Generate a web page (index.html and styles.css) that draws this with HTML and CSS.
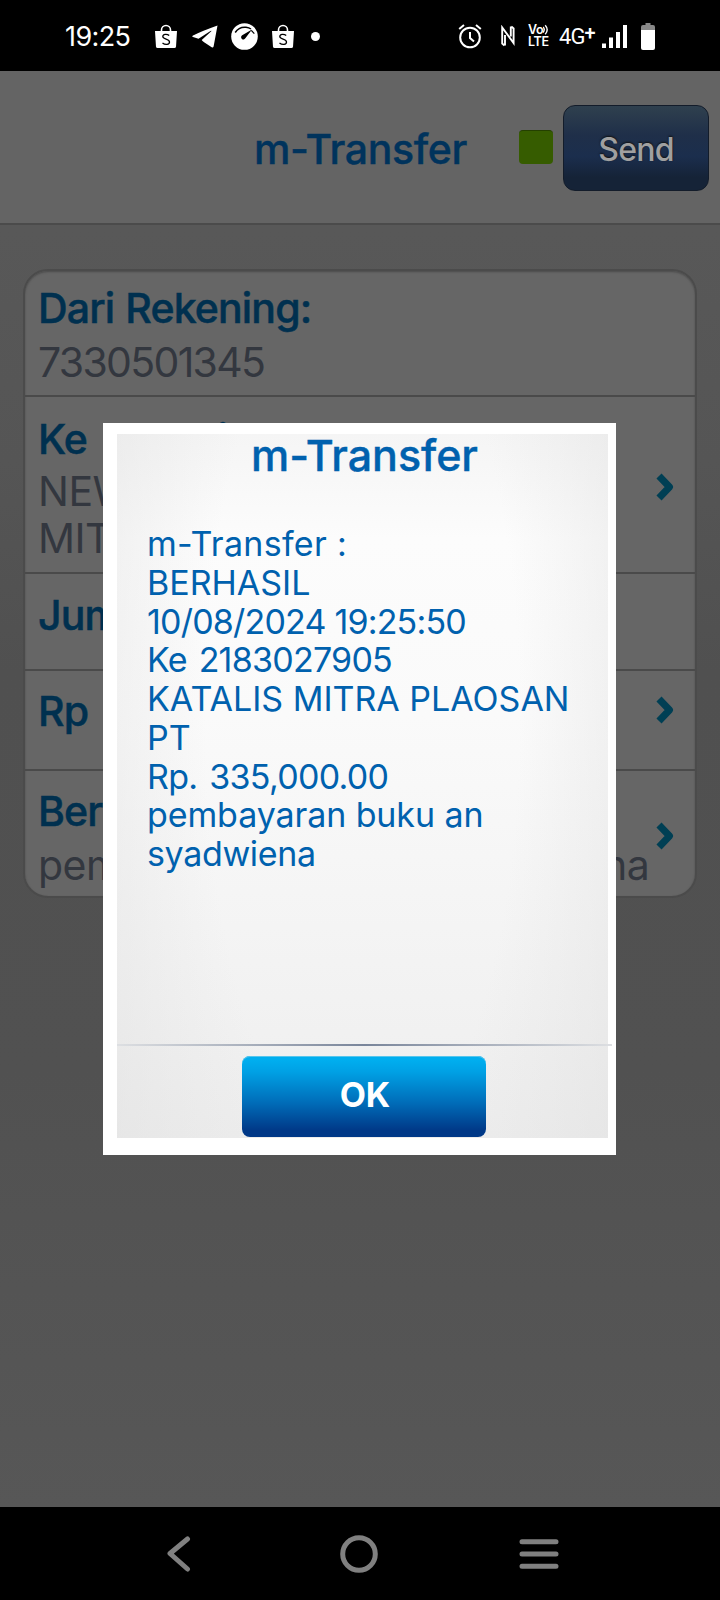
FILE: index.html
```
<!DOCTYPE html>
<html lang="id">
<head>
<meta charset="utf-8">
<title>m-Transfer</title>
<link rel="stylesheet" href="styles.css">
</head>
<body>
<div class="phone">
  <header class="status">
    <span class="clock">19:25</span>
    <svg class="bag" width="22" height="25" viewBox="0 0 22 25"><path d="M6.500 8V6a4.500 4.500 0 0 1 9 0v2" fill="none" stroke="#fff" stroke-width="1.600"/><path d="M0 7h22l-1 15.500q-.1 1.500-1.600 1.500H2.600Q1.100 24 1 22.500z" fill="#fff"/><path d="M14.200 11.600C12 9.700 7.800 10 7.800 12.600c0 3.200 6.700 2 6.700 5.400 0 2.900-4.300 3.200-7 1" fill="none" stroke="#000" stroke-width="1.300"/></svg>
    <svg class="plane" width="26" height="23" viewBox="0 0 26 23"><path d="M25.500.5Q10 6 1 10.500q-1.500 1 0 1.600l5.500 1.700L18.500 6q1.500-.6.500.5L9.700 15q.5 1.200 10 7.200 1.300.8 1.900-.7z" fill="#fff"/></svg>
    <svg class="gauge" width="27" height="27" viewBox="0 0 27 27"><circle cx="13.500" cy="13.500" r="13.300" fill="#fff"/><path d="M4.200 9.500Q8 3.500 15 4.200q3 .4 5 1.800" fill="none" stroke="#000" stroke-width="1.500"/><path d="M21 6.500 11.200 12.200a2.300 2.300 0 1 0 3.300 2.900z" fill="#000"/><path d="m20.300 7.400 3 3.200" stroke="#000" stroke-width="1.200"/></svg>
    <svg class="bag bag-second" width="22" height="25" viewBox="0 0 22 25"><path d="M6.500 8V6a4.500 4.500 0 0 1 9 0v2" fill="none" stroke="#fff" stroke-width="1.600"/><path d="M0 7h22l-1 15.500q-.1 1.500-1.600 1.500H2.600Q1.100 24 1 22.500z" fill="#fff"/><path d="M14.200 11.600C12 9.700 7.800 10 7.800 12.600c0 3.200 6.700 2 6.700 5.400 0 2.900-4.300 3.200-7 1" fill="none" stroke="#000" stroke-width="1.300"/></svg>
    <span class="dot"></span>
    <svg class="alarm" width="24" height="25" viewBox="0 0 24 25"><g fill="none" stroke="#fff" stroke-width="2"><circle cx="12" cy="13.500" r="9.800"/><path d="M1.200 5 6 1M22.800 5 18 1M12 8v6l4 3.500"/></g></svg>
    <svg class="nfc" width="14" height="22" viewBox="0 0 14 22"><path d="M3.500 20.500 1.200 18.500V2.500L12.600 18V3.500L10.300 1.500M4 20.500V10M9.800 1.500V11.500" fill="none" stroke="#fff" stroke-width="1.900"/></svg>
    <span class="volte"><span class="vo">Vo<svg width="7" height="12" viewBox="0 0 7 12"><path d="M0 3q2.500 2.500 0 5.500M2.200 1.300q4 4.500 0 9" fill="none" stroke="#fff" stroke-width="1.400"/></svg></span><span class="lte">LTE</span></span>
    <span class="net">4G<span class="plus">+</span></span>
    <svg class="signal" width="25" height="23" viewBox="0 0 25 23"><path d="M0 18.500h4V23H0zM7 12.500h4V23H7zM14 7h4v16h-4zM21 0h4v23h-4z" fill="#fff"/></svg>
    <svg class="battery" width="14" height="27" viewBox="0 0 14 27"><path d="M4.500 0h5v2h2.500q2 0 2 2v4H0V4q0-2 2-2h2.500z" fill="#888"/><path d="M0 7h14v18q0 2-2 2H2q-2 0-2-2z" fill="#fff"/></svg>
  </header>

  <main class="app">
    <div class="bar">
      <h1 class="bar-title">m-Transfer</h1>
      <span class="indicator"></span>
      <button class="send">Send</button>
    </div>
    <section class="card">
      <div class="row from">
        <div class="label">Dari Rekening:</div>
        <div class="value number">7330501345</div>
      </div>
      <div class="row to">
        <div class="label">Ke Rekening:</div>
        <div class="value">NEW</div>
        <div class="value">MITRA</div>
        <svg class="chevron" width="20" height="30" viewBox="0 0 20 30"><path d="M4 4 14.500 15 4 26" /></svg>
      </div>
      <div class="row amount"><div class="label">Jumlah</div></div>
      <div class="row money">
        <div class="label">Rp</div>
        <svg class="chevron" width="20" height="30" viewBox="0 0 20 30"><path d="M4 4 14.500 15 4 26" /></svg>
      </div>
      <div class="row note">
        <div class="label">Berita:</div>
        <div class="value memo">pembayaran buku an syadwiena</div>
        <svg class="chevron" width="20" height="30" viewBox="0 0 20 30"><path d="M4 4 14.500 15 4 26" /></svg>
      </div>
    </section>
  </main>

  <nav class="nav">
    <svg width="24" height="36" viewBox="0 0 24 36"><path d="M20.500 3 3 17.500 20.500 33"/></svg>
    <svg width="38" height="38" viewBox="0 0 38 38"><circle cx="19" cy="19" r="16.300"/></svg>
    <svg width="40" height="30" viewBox="0 0 40 30"><path d="M3 2.800h34M3 15h34M3 27.200h34"/></svg>
  </nav>

  <div class="dialog" role="dialog">
    <div class="panel">
      <h2 class="dialog-title">m-Transfer</h2>
      <div class="message">
        <div class="service">m-Transfer :</div>
        <div>BERHASIL</div>
        <div class="time">10/08/2024 19:25:50</div>
        <div class="account">Ke 2183027905</div>
        <div>KATALIS MITRA PLAOSAN</div>
        <div>PT</div>
        <div class="sum">Rp. 335,000.00</div>
        <div class="text">pembayaran buku an</div>
        <div class="text-end">syadwiena</div>
      </div>
      <div class="rule"></div>
      <button class="ok">OK</button>
    </div>
  </div>
</div>
</body>
</html>
```
FILE: styles.css
```
* { box-sizing: border-box; }
body { margin: 0; background: #000; font-family: Inter, "Liberation Sans", sans-serif; }
h1, h2 { margin: 0; font-weight: 500; }
button { font-family: inherit; padding: 0; border: 0; }
svg { display: block; flex: none; }
.phone { position: relative; width: 720px; height: 1600px; display: flex; flex-direction: column; overflow: hidden; }

.status { height: 71px; background: #000; color: #fff; display: flex; align-items: center; padding: 1px 0 0 65px; white-space: nowrap; flex: none; }
.clock { width: 90px; font-size: 27px; letter-spacing: -0.600px; padding-top: 1px; }
.plane { margin-left: 15px; }
.gauge { margin-left: 13px; }
.bag-second { margin-left: 14px; }
.dot { width: 9px; height: 9px; border-radius: 50%; background: #fff; margin-left: 17px; }
.alarm { margin-left: 138px; }
.nfc { margin-left: 19px; }
.volte { width: 21px; margin-left: 13px; display: flex; flex-direction: column; font-size: 12.5px; font-weight: 600; line-height: 11.5px; letter-spacing: -0.4px; }
.vo { display: flex; }
.lte { letter-spacing: -0.3px; }
.net { width: 34px; margin-left: 10px; font-family: Roboto, sans-serif; font-size: 22px; display: flex; letter-spacing: -0.900px; }
.plus { font-size: 20px; font-weight: 500; margin-top: -3px; }
.signal { margin-left: 9px; }
.battery { margin-left: 14px; }

.app { flex: 1; background: linear-gradient(#585858 0, #585858 160px, #555 390px, #505050 600px, #515151 1000px, #575757 1436px); }
.bar { height: 154px; background: #646464; border-bottom: 2px solid #4b4b4b; display: flex; align-items: center; padding: 1px 0 0 254px; }
.bar-title { width: 265px; font-size: 41px; color: #00335c; white-space: nowrap; letter-spacing: -0.400px; padding-top: 2px; -webkit-text-stroke: 0.4px; }
.indicator { width: 34px; height: 34px; border-radius: 4px; background: #365c00; border-top: 1px solid #244000; margin-top: -2px; }
.send { width: 146px; height: 86px; margin-left: 10px; border: 1px solid #131c2a; border-radius: 12px; background: linear-gradient(#2f404e, #1f2f49 35%, #1b2e4d 60%, #152337 85%); color: #a0a0a0; font-size: 32px; font-weight: 500; letter-spacing: -0.800px; padding-top: 4px; text-shadow: 0 -1px 2px #111; }

.card { margin: 44px 23px 0; width: 674px; height: 629px; border: 2px solid #4b4b4b; border-radius: 25px; background: #666; overflow: hidden; box-shadow: inset 0 1px 2px #4b4b4b; }
.row { position: relative; border-bottom: 2px solid #4a4a4a; padding-left: 13px; white-space: nowrap; }
.row:last-child { border-bottom: 0; }
.label { color: #00304f; font-size: 41px; font-weight: 500; line-height: 50px; letter-spacing: -0.850px; word-spacing: 1px; -webkit-text-stroke: 0.5px; }
.value { color: #33373f; font-size: 41px; font-weight: 400; line-height: 47px; letter-spacing: -0.500px; }
.number { letter-spacing: -1.700px; }
.memo { letter-spacing: -0.550px; }
.from { height: 126px; padding-top: 12px; }
.from .value { padding-top: 6px; }
.to { height: 177px; padding-top: 14px; }
.to .label { line-height: 56px; word-spacing: 4px; }
.to .value { position: relative; top: 1px; }
.amount { height: 97px; padding-top: 16px; }
.money { height: 100px; padding-top: 15px; }
.note { height: 125px; padding-top: 15px; }
.note .value { padding-top: 6px; }
.chevron { position: absolute; right: 20px; top: 75px; }
.money .chevron { top: 24px; }
.note .chevron { top: 50px; }
.chevron path { fill: none; stroke: #003f54; stroke-width: 7; stroke-linejoin: round; }

.nav { height: 93px; background: #000; flex: none; display: flex; align-items: center; padding-left: 167px; }
.nav svg { fill: none; stroke: #808080; stroke-width: 5; stroke-linecap: round; stroke-linejoin: round; }
.nav svg:nth-child(2) { margin-left: 149px; }
.nav svg:nth-child(3) { margin-left: 141px; }

.dialog { position: absolute; left: 103px; top: 423px; width: 513px; height: 732px; background: #fff; padding: 11px 4px 17px 14px; }
.panel { width: 495px; height: 704px; background: radial-gradient(ellipse 58% 115% at 50% 40%, rgba(224,224,224,0) 55%, rgba(224,224,224,.65) 115%) 0 0 / 491px 704px no-repeat, linear-gradient(#f5f5f5, #fcfcfc 15%, #fafafa 40%, #f1f1f1 85%, #ededed) 0 0 / 491px 704px no-repeat; display: flex; flex-direction: column; }
.dialog-title { height: 85px; padding-left: 134px; line-height: 43px; font-size: 43px; letter-spacing: -0.050px; color: #0061ae; white-space: nowrap; -webkit-text-stroke: 0.4px; }
.message { height: 525px; padding: 6px 0 0 30px; color: #0061ae; font-size: 34px; line-height: 38.750px; white-space: nowrap; }
.service { letter-spacing: 0.300px; }
.time { letter-spacing: -0.800px; }
.account { letter-spacing: -0.750px; word-spacing: 3px; }
.sum { letter-spacing: -0.700px; word-spacing: 3px; }
.text { letter-spacing: -0.100px; }
.text-end { letter-spacing: -0.350px; }
.rule { height: 2px; flex: none; background: linear-gradient(90deg, #dddfe2, #79859a 50%, #dddfe2); }
.ok { width: 244px; height: 81px; margin: 10px 0 0 125px; border-radius: 8px; background: linear-gradient(#00aeef 5%, #00a0e4 20%, #006cb8 58%, #003887 92%); box-shadow: inset 0 1px #56c5ec; color: #fff; font-size: 34px; font-weight: 650; padding: 0 0 5px 2px; }
```
